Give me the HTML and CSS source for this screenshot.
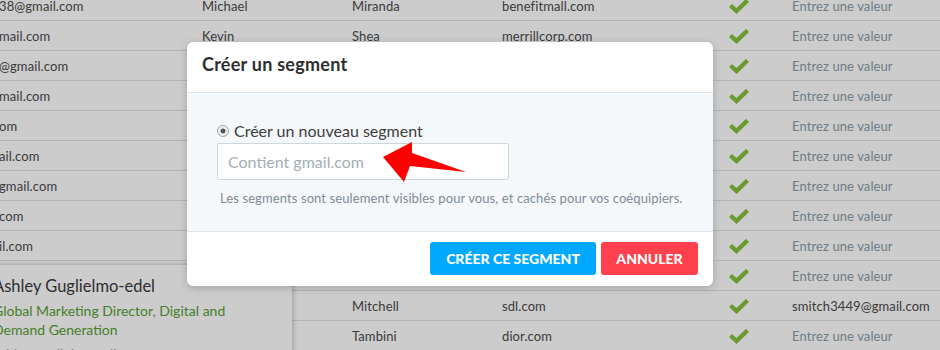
FILE: index.html
```html
<!DOCTYPE html>
<html lang="fr">
<head>
<meta charset="UTF-8" />
<title>Créer un segment</title>
<link rel="stylesheet" href="styles.css">
</head>
<body>

<div class="table">
  <div class="row"><span>38@gmail.com</span><span>Michael</span><span>Miranda</span><span>benefitmall.com</span><span class="check"></span><span class="empty">Entrez une valeur</span></div>
  <div class="row"><span>mail.com</span><span>Kevin</span><span>Shea</span><span>merrillcorp.com</span><span class="check"></span><span class="empty">Entrez une valeur</span></div>
  <div class="row"><span>@gmail.com</span><span></span><span></span><span></span><span class="check"></span><span class="empty">Entrez une valeur</span></div>
  <div class="row"><span>mail.com</span><span></span><span></span><span></span><span class="check"></span><span class="empty">Entrez une valeur</span></div>
  <div class="row"><span>om</span><span></span><span></span><span></span><span class="check"></span><span class="empty">Entrez une valeur</span></div>
  <div class="row"><span>ail.com</span><span></span><span></span><span></span><span class="check"></span><span class="empty">Entrez une valeur</span></div>
  <div class="row"><span>gmail.com</span><span></span><span></span><span></span><span class="check"></span><span class="empty">Entrez une valeur</span></div>
  <div class="row"><span>com</span><span></span><span></span><span></span><span class="check"></span><span class="empty">Entrez une valeur</span></div>
  <div class="row"><span>il.com</span><span></span><span></span><span></span><span class="check"></span><span class="empty">Entrez une valeur</span></div>
  <div class="row"><span></span><span></span><span></span><span></span><span class="check"></span><span class="empty">Entrez une valeur</span></div>
  <div class="row"><span></span><span></span><span>Mitchell</span><span>sdl.com</span><span class="check"></span><span>smitch3449@gmail.com</span></div>
  <div class="row"><span></span><span></span><span>Tambini</span><span>dior.com</span><span class="check"></span><span class="empty">Entrez une valeur</span></div>
</div>

<div class="contact-card">
  <div class="contact-name">Ashley Guglielmo-edel</div>
  <div class="contact-title">Global Marketing Director, Digital and Demand Generation</div>
  <div class="contact-mail">ashley.guglielmo@dior.com</div>
</div>

<div class="overlay"></div>

<div class="modal">
  <div class="modal-header">Créer un segment</div>
  <div class="modal-body">
    <label class="radio"><span class="radio-dot"></span>Créer un nouveau segment</label>
    <input class="segment-input" type="text" placeholder="Contient gmail.com">
    <p class="hint">Les segments sont seulement visibles pour vous, et cachés pour vos coéquipiers.</p>
  </div>
  <div class="modal-footer">
    <button class="btn btn-blue">CRÉER CE SEGMENT</button>
    <button class="btn btn-red">ANNULER</button>
  </div>
</div>

<svg class="arrow" width="90" height="50" viewBox="380 138 90 50">
  <polygon points="383,157 412,142 412,153 466,172 410,166 404,182" fill="#ff0000"/>
</svg>

<script>
  var tick = '<svg width="20" height="15" viewBox="0 0 20 15"><polyline points="1.5,6.5 7.5,12 18.5,1.5" fill="none" stroke="#85c13d" stroke-width="4.4"/></svg>';
  document.querySelectorAll('.check').forEach(function (c) { c.innerHTML = tick; });
</script>
</body>
</html>
```

FILE: styles.css
```css
/* Base */
*, *::before, *::after {
  box-sizing: border-box;
}
body {
  margin: 0;
  font-family: Lato, "Open Sans", sans-serif;
  background: #fff;
  color: #4b4b4b;
  width: 940px;
  height: 350px;
  overflow: hidden;
  position: relative;
}

/* Contacts table */
.table {
  margin-top: -9px;
}
.row {
  display: grid;
  grid-template-columns: 202px 150px 150px 227px 63px 1fr;
  height: 30px;
  border-bottom: 1px solid #e0e0e0;
  align-items: center;
  font-size: 13px;
  letter-spacing: 0.1px;
  white-space: nowrap;
}
.row span:first-child {
  margin-left: -1px;
}
.row .empty {
  color: #8b9ca7;
}
.check {
  display: flex;
  align-items: center;
  padding-top: 1px;
}
.check svg {
  display: block;
}

/* Contact popover (under the overlay) */
.contact-card {
  position: absolute;
  left: -20px;
  top: 264px;
  width: 312px;
  height: 110px;
  background: #fff;
  padding: 11px 0 0 13px;
  box-shadow: 2px 0 4px rgba(0, 0, 0, 0.18);
  border-top: 1px solid #e0e0e0;
}
.contact-name {
  font-size: 16.5px;
  color: #3a3a3a;
  margin-bottom: 5px;
}
.contact-title {
  font-size: 14px;
  line-height: 19px;
  color: #57a033;
  width: 260px;
}
.contact-mail {
  margin-top: 6px;
  font-size: 14px;
  color: #8b9ca7;
}

.overlay {
  position: absolute;
  inset: 0;
  background: rgba(0, 0, 0, 0.2);
}

/* Modal */
.modal {
  position: absolute;
  left: 187px;
  top: 42px;
  width: 526px;
  background: #fff;
  border-radius: 6px;
  box-shadow: 0 2px 8px rgba(0, 0, 0, 0.2);
  overflow: hidden;
}
.modal-header {
  height: 51px;
  padding: 11px 15px 0;
  font-size: 18px;
  letter-spacing: 0.25px;
  font-weight: 700;
  color: #2e2e2e;
  border-bottom: 1px solid #dde3e8;
}
.modal-body {
  background: #f5f8fb;
  padding: 28px 30px 24px;
  border-bottom: 1px solid #dde3e8;
  height: 139px;
}
.radio {
  display: flex;
  align-items: center;
  font-size: 16px;
  color: #3d3d3d;
  height: 19px;
}
.radio-dot {
  width: 12px;
  height: 12px;
  border-radius: 50%;
  border: 1px solid #a5a5a5;
  background: radial-gradient(circle, #555 0 2.2px, #eee 2.8px);
  margin-right: 5px;
}
.segment-input {
  display: block;
  width: 292px;
  height: 37px;
  margin-top: 3px;
  border: 1px solid #cbd6dd;
  border-radius: 2px;
  padding: 0 10px;
  font-family: inherit;
  font-size: 16px;
  background: #fff;
}
.segment-input::placeholder {
  color: #a3aeb5;
}
.hint {
  margin: 10px 0 0 3px;
  font-size: 13px;
  letter-spacing: 0.1px;
  color: #7f8b94;
}
.modal-footer {
  display: flex;
  justify-content: flex-end;
  gap: 5px;
  padding: 10px 15px 10px;
  height: 54px;
}
.btn {
  border: none;
  border-radius: 3px;
  color: #fff;
  font-family: inherit;
  font-size: 14px;
  font-weight: 900;
  height: 33px;
  padding: 0;
}
.btn-blue {
  background: #00a9ff;
  width: 166px;
}
.btn-red {
  background: #ff414e;
  width: 97px;
}

.arrow {
  position: absolute;
  left: 380px;
  top: 138px;
}
```
